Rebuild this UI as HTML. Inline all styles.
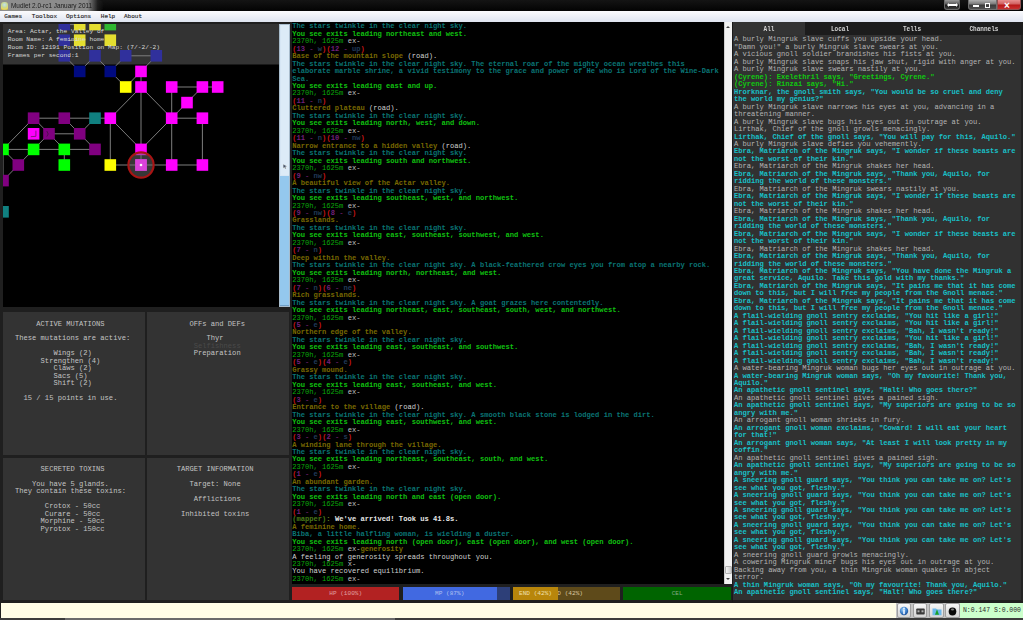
<!DOCTYPE html>
<html><head><meta charset="utf-8"><title>Mudlet</title><style>
*{margin:0;padding:0;box-sizing:border-box}
html,body{width:1023px;height:620px;overflow:hidden;background:#1f1f1f;font-family:"Liberation Mono",monospace}
.abs{position:absolute}
.l{height:7.48px;line-height:7.48px;white-space:pre}
.con{position:absolute;font-size:7.12px;font-weight:bold}
.panel{position:absolute;background:#333;color:#d4d4d4;font-size:7.12px;text-align:center;padding-top:7.16px}
</style></head><body>
<div class="abs" style="left:0;top:0;width:1023px;height:11px;background:linear-gradient(#141414,#030303)"></div>
<div class="abs" style="left:0;top:0;width:104px;height:11px;background:linear-gradient(90deg,#8e8e8e 0,#8a8a8a 84%,rgba(40,40,40,0.6) 94%,rgba(0,0,0,0) 100%);border-radius:0 6px 6px 0;filter:blur(0.6px)"></div>
<div class="abs" style="left:1px;top:1.5px;width:7px;height:8px;background:radial-gradient(circle at 50% 35%,#c0e0f0 0,#c8d890 45%,#e8d860 70%,#b8a040 100%);border-radius:3px 3px 1px 1px"></div>
<div class="abs" style="left:11px;top:0px;height:11px;line-height:11px;font-family:'Liberation Sans',sans-serif;font-size:7.5px;color:#1c1c1c;transform:scaleX(0.855);transform-origin:0 0;white-space:pre">Mudlet 2.0-rc1 January 2011</div>
<div class="abs" style="left:943.5px;top:0;width:16.5px;height:10px;background:linear-gradient(#9a9a9a,#5a5a5a 45%,#1a1a1a 55%,#3a3a3a);border-radius:0 0 3px 3px;border:1px solid #6a6a6a;border-top:none"></div>
<div class="abs" style="left:968px;top:0;width:29px;height:10px;background:linear-gradient(#b0b0b0,#7a7a7a 45%,#3a3a3a 55%,#505050);border-radius:0 0 0 3px;border:1px solid #707070;border-top:none"></div>
<div class="abs" style="left:997px;top:0;width:24px;height:10px;background:linear-gradient(#e89090,#d06060 45%,#b81818 55%,#c83030);border-radius:0 0 3px 0;border:1px solid #905050;border-top:none"></div>
<div class="abs" style="left:947.5px;top:4px;width:9px;height:2px;background:#fff"></div>
<div class="abs" style="left:946.5px;top:3px;width:0;height:0;border-top:2px solid transparent;border-bottom:2px solid transparent;border-right:2px solid #fff"></div>
<div class="abs" style="left:955.5px;top:3px;width:0;height:0;border-top:2px solid transparent;border-bottom:2px solid transparent;border-left:2px solid #fff"></div>
<div class="abs" style="left:973px;top:5px;width:6px;height:2px;background:#fff"></div>
<div class="abs" style="left:985px;top:3px;width:5px;height:5px;border:1.2px solid #fff"></div>
<div class="abs" style="left:1004px;top:-0.5px;color:#fff;font-size:10px;line-height:11px;font-family:'Liberation Sans',sans-serif;font-weight:bold">&#215;</div>
<div class="abs" style="left:0;top:11px;width:1023px;height:11px;background:linear-gradient(#fbfbfd,#dfe4f0)"></div>
<div class="abs" style="left:4.2px;top:10.6px;height:11px;line-height:11px;font-size:6px;color:#1a1a1a;font-weight:normal;-webkit-text-stroke:0.15px #333">Games</div>
<div class="abs" style="left:31.8px;top:10.6px;height:11px;line-height:11px;font-size:6px;color:#1a1a1a;font-weight:normal;-webkit-text-stroke:0.15px #333">Toolbox</div>
<div class="abs" style="left:66px;top:10.6px;height:11px;line-height:11px;font-size:6px;color:#1a1a1a;font-weight:normal;-webkit-text-stroke:0.15px #333">Options</div>
<div class="abs" style="left:100.8px;top:10.6px;height:11px;line-height:11px;font-size:6px;color:#1a1a1a;font-weight:normal;-webkit-text-stroke:0.15px #333">Help</div>
<div class="abs" style="left:124px;top:10.6px;height:11px;line-height:11px;font-size:6px;color:#1a1a1a;font-weight:normal;-webkit-text-stroke:0.15px #333">About</div>
<svg width="277" height="283" viewBox="2.5 24 277 283" style="position:absolute;left:2.5px;top:24px">
<rect x="2.5" y="24" width="277" height="283" fill="#000"/>
<rect x="2.5" y="24" width="277" height="40.5" fill="#333333"/>
<line x1="63.8" y1="55.8" x2="79.2" y2="71.4" stroke="#7e7e7e" stroke-width="1"/>
<line x1="79.2" y1="71.4" x2="94.5" y2="55.8" stroke="#7e7e7e" stroke-width="1"/>
<line x1="94.5" y1="55.8" x2="109.8" y2="71.4" stroke="#7e7e7e" stroke-width="1"/>
<line x1="109.8" y1="71.4" x2="125.2" y2="55.8" stroke="#7e7e7e" stroke-width="1"/>
<line x1="125.2" y1="55.8" x2="155.8" y2="55.8" stroke="#7e7e7e" stroke-width="1"/>
<line x1="155.8" y1="55.8" x2="140.5" y2="71.4" stroke="#7e7e7e" stroke-width="1"/>
<line x1="109.8" y1="71.4" x2="125.2" y2="87.0" stroke="#7e7e7e" stroke-width="1"/>
<line x1="125.2" y1="87.0" x2="140.5" y2="71.4" stroke="#7e7e7e" stroke-width="1"/>
<line x1="140.5" y1="71.4" x2="140.5" y2="87.0" stroke="#7e7e7e" stroke-width="1"/>
<line x1="171.2" y1="87.0" x2="201.9" y2="87.0" stroke="#7e7e7e" stroke-width="1"/>
<line x1="201.9" y1="87.0" x2="217.2" y2="87.0" stroke="#7e7e7e" stroke-width="1"/>
<line x1="140.5" y1="87.0" x2="140.5" y2="149.4" stroke="#7e7e7e" stroke-width="1"/>
<line x1="140.5" y1="87.0" x2="109.8" y2="118.2" stroke="#7e7e7e" stroke-width="1"/>
<line x1="140.5" y1="87.0" x2="171.2" y2="118.2" stroke="#7e7e7e" stroke-width="1"/>
<line x1="109.8" y1="118.2" x2="140.5" y2="149.4" stroke="#7e7e7e" stroke-width="1"/>
<line x1="171.2" y1="118.2" x2="140.5" y2="149.4" stroke="#7e7e7e" stroke-width="1"/>
<line x1="171.2" y1="87.0" x2="171.2" y2="165.0" stroke="#7e7e7e" stroke-width="1"/>
<line x1="171.2" y1="118.2" x2="186.5" y2="102.6" stroke="#7e7e7e" stroke-width="1"/>
<line x1="186.5" y1="102.6" x2="201.9" y2="87.0" stroke="#7e7e7e" stroke-width="1"/>
<line x1="171.2" y1="118.2" x2="201.9" y2="118.2" stroke="#7e7e7e" stroke-width="1"/>
<line x1="201.9" y1="118.2" x2="201.9" y2="165.0" stroke="#7e7e7e" stroke-width="1"/>
<line x1="109.8" y1="118.2" x2="109.8" y2="165.0" stroke="#7e7e7e" stroke-width="1"/>
<line x1="109.8" y1="165.0" x2="201.9" y2="165.0" stroke="#7e7e7e" stroke-width="1"/>
<line x1="140.5" y1="149.4" x2="140.5" y2="165.0" stroke="#7e7e7e" stroke-width="1"/>
<line x1="33.1" y1="118.2" x2="109.8" y2="118.2" stroke="#7e7e7e" stroke-width="1"/>
<line x1="33.1" y1="118.2" x2="2.5" y2="149.4" stroke="#7e7e7e" stroke-width="1"/>
<line x1="33.1" y1="118.2" x2="48.5" y2="133.8" stroke="#7e7e7e" stroke-width="1"/>
<line x1="63.8" y1="118.2" x2="79.2" y2="133.8" stroke="#7e7e7e" stroke-width="1"/>
<line x1="79.2" y1="133.8" x2="94.5" y2="118.2" stroke="#7e7e7e" stroke-width="1"/>
<line x1="48.5" y1="133.8" x2="79.2" y2="133.8" stroke="#7e7e7e" stroke-width="1"/>
<line x1="48.5" y1="133.8" x2="33.1" y2="149.4" stroke="#7e7e7e" stroke-width="1"/>
<line x1="48.5" y1="133.8" x2="63.8" y2="149.4" stroke="#7e7e7e" stroke-width="1"/>
<line x1="79.2" y1="133.8" x2="94.5" y2="149.4" stroke="#7e7e7e" stroke-width="1"/>
<line x1="2.5" y1="149.4" x2="94.5" y2="149.4" stroke="#7e7e7e" stroke-width="1"/>
<line x1="2.5" y1="149.4" x2="17.8" y2="165.0" stroke="#7e7e7e" stroke-width="1"/>
<line x1="33.1" y1="149.4" x2="17.8" y2="165.0" stroke="#7e7e7e" stroke-width="1"/>
<line x1="63.8" y1="149.4" x2="63.8" y2="165.0" stroke="#7e7e7e" stroke-width="1"/>
<line x1="2.5" y1="149.4" x2="2.5" y2="180.6" stroke="#7e7e7e" stroke-width="1"/>
<line x1="17.8" y1="165.0" x2="2.5" y2="180.6" stroke="#7e7e7e" stroke-width="1"/>
<line x1="63.8" y1="24.6" x2="79.2" y2="24.6" stroke="#7e7e7e" stroke-width="1"/>
<line x1="63.8" y1="40.2" x2="79.2" y2="40.2" stroke="#7e7e7e" stroke-width="1"/>
<rect x="58.0" y="18.8" width="11.6" height="11.6" fill="#30309c"/>
<rect x="73.4" y="18.8" width="11.6" height="11.6" fill="#e4de30"/>
<rect x="88.7" y="18.8" width="11.6" height="11.6" fill="#e4de30"/>
<rect x="104.0" y="18.8" width="11.6" height="11.6" fill="#30b830"/>
<rect x="58.0" y="34.4" width="11.6" height="11.6" fill="#30309c"/>
<rect x="73.4" y="34.4" width="11.6" height="11.6" fill="#e4de30"/>
<rect x="104.0" y="34.4" width="11.6" height="11.6" fill="#e4de30"/>
<rect x="58.0" y="50.0" width="11.6" height="11.6" fill="#30309c"/>
<rect x="88.7" y="50.0" width="11.6" height="11.6" fill="#30309c"/>
<rect x="119.4" y="50.0" width="11.6" height="11.6" fill="#30309c"/>
<rect x="150.0" y="50.0" width="11.6" height="11.6" fill="#30309c"/>
<rect x="73.4" y="65.6" width="11.6" height="11.6" fill="#000a80"/>
<rect x="104.0" y="65.6" width="11.6" height="11.6" fill="#000a80"/>
<rect x="134.7" y="65.6" width="11.6" height="11.6" fill="#ff00ff"/>
<rect x="119.4" y="81.2" width="11.6" height="11.6" fill="#ffff00"/>
<rect x="134.7" y="81.2" width="11.6" height="11.6" fill="#ff00ff"/>
<rect x="165.4" y="81.2" width="11.6" height="11.6" fill="#ff00ff"/>
<rect x="196.1" y="81.2" width="11.6" height="11.6" fill="#ff00ff"/>
<rect x="211.4" y="81.2" width="11.6" height="11.6" fill="#ff00ff"/>
<rect x="180.7" y="96.8" width="11.6" height="11.6" fill="#ff00ff"/>
<rect x="27.3" y="112.4" width="11.6" height="11.6" fill="#800080"/>
<rect x="58.0" y="112.4" width="11.6" height="11.6" fill="#800080"/>
<rect x="88.7" y="112.4" width="11.6" height="11.6" fill="#108080"/>
<rect x="104.0" y="112.4" width="11.6" height="11.6" fill="#ff00ff"/>
<rect x="165.4" y="112.4" width="11.6" height="11.6" fill="#ff00ff"/>
<rect x="196.1" y="112.4" width="11.6" height="11.6" fill="#ff00ff"/>
<rect x="27.3" y="128.0" width="11.6" height="11.6" fill="#ff00ff"/>
<rect x="42.7" y="128.0" width="11.6" height="11.6" fill="#800080"/>
<rect x="73.4" y="128.0" width="11.6" height="11.6" fill="#800080"/>
<rect x="-3.3" y="143.6" width="11.6" height="11.6" fill="#00ff00"/>
<rect x="27.3" y="143.6" width="11.6" height="11.6" fill="#00ff00"/>
<rect x="58.0" y="143.6" width="11.6" height="11.6" fill="#00ff00"/>
<rect x="88.7" y="143.6" width="11.6" height="11.6" fill="#800080"/>
<rect x="134.7" y="143.6" width="11.6" height="11.6" fill="#ff00ff"/>
<rect x="12.0" y="159.2" width="11.6" height="11.6" fill="#800080"/>
<rect x="58.0" y="159.2" width="11.6" height="11.6" fill="#00ff00"/>
<rect x="104.0" y="159.2" width="11.6" height="11.6" fill="#ffff00"/>
<rect x="134.7" y="159.2" width="11.6" height="11.6" fill="#e040e0"/>
<rect x="165.4" y="159.2" width="11.6" height="11.6" fill="#ff00ff"/>
<rect x="196.1" y="159.2" width="11.6" height="11.6" fill="#ff00ff"/>
<rect x="-3.3" y="174.8" width="11.6" height="11.6" fill="#800080"/>
<rect x="-3.3" y="206.0" width="11.6" height="11.6" fill="#108080"/>
<path d="M35.4 130.6 V136.3 L30.3 136.7" fill="none" stroke="#602060" stroke-width="0.8"/>
<path d="M46.3 131.0 L47.7 134.0 L46.3 136.6" fill="none" stroke="#401040" stroke-width="0.8"/>
<circle cx="140.5" cy="165.0" r="12.6" fill="rgba(110,110,110,0.5)" stroke="#a81414" stroke-width="2.2"/>
<rect x="134.7" y="159.2" width="11.6" height="11.6" fill="#e040e0" opacity="0.9"/>
<circle cx="140.5" cy="165.0" r="1.3" fill="#fff"/>
</svg>
<div class="abs" style="left:7.8px;top:27.8px;font-size:6.2px;color:#d8d8d8"><div style="height:8px;line-height:8px;white-space:pre">Area: Actar, the Valley of</div><div style="height:8px;line-height:8px;white-space:pre">Room Name: A feminine home</div><div style="height:8px;line-height:8px;white-space:pre">Room ID: 12191 Position on Map: (7/-2/-2)</div><div style="height:8px;line-height:8px;white-space:pre">Frames per second:1</div></div>
<div class="abs" style="left:279px;top:24px;width:11px;height:283px;background:#d6e6f4;border:1px solid #a8bccc"></div>
<div class="abs" style="left:280.5px;top:25px;width:8px;height:150px;background:#dcebf7"></div>
<div class="abs" style="left:280px;top:176px;width:9px;height:130px;background:#94c8ee;border-bottom:1px solid #70a0c8"></div>
<svg class="abs" style="left:283px;top:163.5px" width="4" height="5" viewBox="0 0 6 7"><path d="M0.5 0.5 L5.5 3.2 L3.2 3.8 L4.3 6.3 L3.2 6.7 L2.2 4.4 L0.5 5.8 Z" fill="#3a4a6a" stroke="#c8c0a0" stroke-width="0.4"/></svg>
<div class="abs" style="left:3px;top:312px;width:141.6px;height:142.5px;background:#333"></div>
<div class="con" style="left:15.0px;top:320.56px;color:#c4c4c4;font-weight:normal">
<div class="l">     ACTIVE MUTATIONS</div>
<div class="l">             </div>
<div class="l">These mutations are active:</div>
<div class="l">             </div>
<div class="l">         Wings (2)</div>
<div class="l">      Strengthen (4)</div>
<div class="l">         Claws (2)</div>
<div class="l">         Sacs (5)</div>
<div class="l">         Shift (2)</div>
<div class="l">             </div>
<div class="l">  15 / 15 points in use.</div>
</div>
<div class="abs" style="left:147px;top:312px;width:142px;height:142.5px;background:#333"></div>
<div class="con" style="left:159.6px;top:320.56px;color:#c4c4c4;font-weight:normal">
<div class="l">       OFFs and DEFs</div>
<div class="l">             </div>
<div class="l">           Thyr</div>
<div class="l" style="color:#4a4a4a">        Selfishness</div>
<div class="l">        Preparation</div>
</div>
<div class="abs" style="left:3px;top:457.5px;width:141.6px;height:142.5px;background:#333"></div>
<div class="con" style="left:15.0px;top:466.06px;color:#c4c4c4;font-weight:normal">
<div class="l">      SECRETED TOXINS</div>
<div class="l">             </div>
<div class="l">    You have 5 glands.</div>
<div class="l">They contain these toxins:</div>
<div class="l">             </div>
<div class="l">       Crotox - 50cc</div>
<div class="l">       Curare - 50cc</div>
<div class="l">      Morphine - 50cc</div>
<div class="l">      Pyrotox - 150cc</div>
</div>
<div class="abs" style="left:147px;top:457.5px;width:142px;height:142.5px;background:#333"></div>
<div class="con" style="left:159.6px;top:466.06px;color:#c4c4c4;font-weight:normal">
<div class="l">    TARGET INFORMATION</div>
<div class="l">             </div>
<div class="l">       Target: None</div>
<div class="l">             </div>
<div class="l">        Afflictions</div>
<div class="l">             </div>
<div class="l">     Inhibited toxins</div>
</div>
<div class="abs" style="left:292px;top:22px;width:431.5px;height:562px;background:#000"></div>
<div class="con" style="left:292.2px;top:23.26px"><div class="l"><span style="color:#0a7474">The stars twinkle in the clear night sky.</span></div>
<div class="l"><span style="color:#10c010">You see exits leading northeast and west.</span></div>
<div class="l"><span style="color:#0aa80a;font-weight:normal">2370h, 1625m </span><span style="color:#c0c0c0;font-weight:normal">ex-</span></div>
<div class="l"><span style="color:#c81414">(</span><span style="color:#70207a">13</span><span style="color:#5a1a5a"> - </span><span style="color:#203a58">w</span><span style="color:#c81414">)</span><span style="color:#c81414">(</span><span style="color:#70207a">12</span><span style="color:#5a1a5a"> - </span><span style="color:#203a58">up</span><span style="color:#c81414">)</span></div>
<div class="l"><span style="color:#786800">Base of the mountain slope </span><span style="color:#d0d0d0;font-weight:normal">(road).</span></div>
<div class="l"><span style="color:#0a7474">The stars twinkle in the clear night sky. The eternal roar of the mighty ocean wreathes this</span></div>
<div class="l"><span style="color:#0a7474">elaborate marble shrine, a vivid testimony to the grace and power of He who is Lord of the Wine-Dark</span></div>
<div class="l"><span style="color:#0a7474">Sea.</span></div>
<div class="l"><span style="color:#10c010">You see exits leading east and up.</span></div>
<div class="l"><span style="color:#0aa80a;font-weight:normal">2370h, 1625m </span><span style="color:#c0c0c0;font-weight:normal">ex-</span></div>
<div class="l"><span style="color:#c81414">(</span><span style="color:#70207a">11</span><span style="color:#5a1a5a"> - </span><span style="color:#203a58">n</span><span style="color:#c81414">)</span></div>
<div class="l"><span style="color:#786800">Cluttered plateau </span><span style="color:#d0d0d0;font-weight:normal">(road).</span></div>
<div class="l"><span style="color:#0a7474">The stars twinkle in the clear night sky.</span></div>
<div class="l"><span style="color:#10c010">You see exits leading north, west, and down.</span></div>
<div class="l"><span style="color:#0aa80a;font-weight:normal">2370h, 1625m </span><span style="color:#c0c0c0;font-weight:normal">ex-</span></div>
<div class="l"><span style="color:#c81414">(</span><span style="color:#70207a">11</span><span style="color:#5a1a5a"> - </span><span style="color:#203a58">n</span><span style="color:#c81414">)</span><span style="color:#c81414">(</span><span style="color:#70207a">10</span><span style="color:#5a1a5a"> - </span><span style="color:#203a58">nw</span><span style="color:#c81414">)</span></div>
<div class="l"><span style="color:#786800">Narrow entrance to a hidden valley </span><span style="color:#d0d0d0;font-weight:normal">(road).</span></div>
<div class="l"><span style="color:#0a7474">The stars twinkle in the clear night sky.</span></div>
<div class="l"><span style="color:#10c010">You see exits leading south and northwest.</span></div>
<div class="l"><span style="color:#0aa80a;font-weight:normal">2370h, 1625m </span><span style="color:#c0c0c0;font-weight:normal">ex-</span></div>
<div class="l"><span style="color:#c81414">(</span><span style="color:#70207a">9</span><span style="color:#5a1a5a"> - </span><span style="color:#203a58">nw</span><span style="color:#c81414">)</span></div>
<div class="l"><span style="color:#786800">A beautiful view of the Actar valley.</span></div>
<div class="l"><span style="color:#0a7474">The stars twinkle in the clear night sky.</span></div>
<div class="l"><span style="color:#10c010">You see exits leading southeast, west, and northwest.</span></div>
<div class="l"><span style="color:#0aa80a;font-weight:normal">2370h, 1625m </span><span style="color:#c0c0c0;font-weight:normal">ex-</span></div>
<div class="l"><span style="color:#c81414">(</span><span style="color:#70207a">9</span><span style="color:#5a1a5a"> - </span><span style="color:#203a58">nw</span><span style="color:#c81414">)</span><span style="color:#c81414">(</span><span style="color:#70207a">8</span><span style="color:#5a1a5a"> - </span><span style="color:#203a58">e</span><span style="color:#c81414">)</span></div>
<div class="l"><span style="color:#786800">Grasslands.</span></div>
<div class="l"><span style="color:#0a7474">The stars twinkle in the clear night sky.</span></div>
<div class="l"><span style="color:#10c010">You see exits leading east, southeast, southwest, and west.</span></div>
<div class="l"><span style="color:#0aa80a;font-weight:normal">2370h, 1625m </span><span style="color:#c0c0c0;font-weight:normal">ex-</span></div>
<div class="l"><span style="color:#c81414">(</span><span style="color:#70207a">7</span><span style="color:#5a1a5a"> - </span><span style="color:#203a58">n</span><span style="color:#c81414">)</span></div>
<div class="l"><span style="color:#786800">Deep within the valley.</span></div>
<div class="l"><span style="color:#0a7474">The stars twinkle in the clear night sky. A black-feathered crow eyes you from atop a nearby rock.</span></div>
<div class="l"><span style="color:#10c010">You see exits leading north, northeast, and west.</span></div>
<div class="l"><span style="color:#0aa80a;font-weight:normal">2370h, 1625m </span><span style="color:#c0c0c0;font-weight:normal">ex-</span></div>
<div class="l"><span style="color:#c81414">(</span><span style="color:#70207a">7</span><span style="color:#5a1a5a"> - </span><span style="color:#203a58">n</span><span style="color:#c81414">)</span><span style="color:#c81414">(</span><span style="color:#70207a">6</span><span style="color:#5a1a5a"> - </span><span style="color:#203a58">ne</span><span style="color:#c81414">)</span></div>
<div class="l"><span style="color:#786800">Rich grasslands.</span></div>
<div class="l"><span style="color:#0a7474">The stars twinkle in the clear night sky. A goat grazes here contentedly.</span></div>
<div class="l"><span style="color:#10c010">You see exits leading northeast, east, southeast, south, west, and northwest.</span></div>
<div class="l"><span style="color:#0aa80a;font-weight:normal">2370h, 1625m </span><span style="color:#c0c0c0;font-weight:normal">ex-</span></div>
<div class="l"><span style="color:#c81414">(</span><span style="color:#70207a">5</span><span style="color:#5a1a5a"> - </span><span style="color:#203a58">e</span><span style="color:#c81414">)</span></div>
<div class="l"><span style="color:#786800">Northern edge of the valley.</span></div>
<div class="l"><span style="color:#0a7474">The stars twinkle in the clear night sky.</span></div>
<div class="l"><span style="color:#10c010">You see exits leading east, southeast, and southwest.</span></div>
<div class="l"><span style="color:#0aa80a;font-weight:normal">2370h, 1625m </span><span style="color:#c0c0c0;font-weight:normal">ex-</span></div>
<div class="l"><span style="color:#c81414">(</span><span style="color:#70207a">5</span><span style="color:#5a1a5a"> - </span><span style="color:#203a58">e</span><span style="color:#c81414">)</span><span style="color:#c81414">(</span><span style="color:#70207a">4</span><span style="color:#5a1a5a"> - </span><span style="color:#203a58">e</span><span style="color:#c81414">)</span></div>
<div class="l"><span style="color:#786800">Grassy mound.</span></div>
<div class="l"><span style="color:#0a7474">The stars twinkle in the clear night sky.</span></div>
<div class="l"><span style="color:#10c010">You see exits leading east, southeast, and west.</span></div>
<div class="l"><span style="color:#0aa80a;font-weight:normal">2370h, 1625m </span><span style="color:#c0c0c0;font-weight:normal">ex-</span></div>
<div class="l"><span style="color:#c81414">(</span><span style="color:#70207a">3</span><span style="color:#5a1a5a"> - </span><span style="color:#203a58">e</span><span style="color:#c81414">)</span></div>
<div class="l"><span style="color:#786800">Entrance to the village </span><span style="color:#d0d0d0;font-weight:normal">(road).</span></div>
<div class="l"><span style="color:#0a7474">The stars twinkle in the clear night sky. A smooth black stone is lodged in the dirt.</span></div>
<div class="l"><span style="color:#10c010">You see exits leading east, southwest, and west.</span></div>
<div class="l"><span style="color:#0aa80a;font-weight:normal">2370h, 1625m </span><span style="color:#c0c0c0;font-weight:normal">ex-</span></div>
<div class="l"><span style="color:#c81414">(</span><span style="color:#70207a">3</span><span style="color:#5a1a5a"> - </span><span style="color:#203a58">e</span><span style="color:#c81414">)</span><span style="color:#c81414">(</span><span style="color:#70207a">2</span><span style="color:#5a1a5a"> - </span><span style="color:#203a58">s</span><span style="color:#c81414">)</span></div>
<div class="l"><span style="color:#786800">A winding lane through the village.</span></div>
<div class="l"><span style="color:#0a7474">The stars twinkle in the clear night sky.</span></div>
<div class="l"><span style="color:#10c010">You see exits leading northeast, southeast, south, and west.</span></div>
<div class="l"><span style="color:#0aa80a;font-weight:normal">2370h, 1625m </span><span style="color:#c0c0c0;font-weight:normal">ex-</span></div>
<div class="l"><span style="color:#c81414">(</span><span style="color:#70207a">1</span><span style="color:#5a1a5a"> - </span><span style="color:#203a58">e</span><span style="color:#c81414">)</span></div>
<div class="l"><span style="color:#786800">An abundant garden.</span></div>
<div class="l"><span style="color:#0a7474">The stars twinkle in the clear night sky.</span></div>
<div class="l"><span style="color:#10c010">You see exits leading north and east (open door).</span></div>
<div class="l"><span style="color:#0aa80a;font-weight:normal">2370h, 1625m </span><span style="color:#c0c0c0;font-weight:normal">ex-</span></div>
<div class="l"><span style="color:#c81414">(</span><span style="color:#70207a">1</span><span style="color:#5a1a5a"> - </span><span style="color:#203a58">e</span><span style="color:#c81414">)</span></div>
<div class="l"><span style="color:#4a7a18">(mapper)</span><span style="color:#6a8a20">: </span><span style="color:#e8e8e8">We&#x27;ve arrived! Took us 41.8s.</span></div>
<div class="l"><span style="color:#786800">A feminine home.</span></div>
<div class="l"><span style="color:#0a7474">Biba, a little halfling woman, is wielding a duster.</span></div>
<div class="l"><span style="color:#10c010">You see exits leading north (open door), east (open door), and west (open door).</span></div>
<div class="l"><span style="color:#0aa80a;font-weight:normal">2370h, 1625m </span><span style="color:#c0c0c0;font-weight:normal">ex-</span><span style="color:#786800">generosity</span></div>
<div class="l"><span style="color:#d0d0d0;font-weight:normal">A feeling of generosity spreads throughout you.</span></div>
<div class="l"><span style="color:#0aa80a;font-weight:normal">2370h, 1625m </span><span style="color:#c0c0c0;font-weight:normal">x-</span></div>
<div class="l"><span style="color:#d0d0d0;font-weight:normal">You have recovered equilibrium.</span></div>
<div class="l"><span style="color:#0aa80a;font-weight:normal">2370h, 1625m </span><span style="color:#c0c0c0;font-weight:normal">ex-</span></div></div>
<div class="abs" style="left:723.5px;top:22px;width:8.4px;height:562px;background:#f2f2f2;border-left:1px solid #d0d0d0"></div>
<div class="abs" style="left:724.5px;top:566px;width:7px;height:8px;background:linear-gradient(90deg,#f4f4f4,#c8c8c8);border:1px solid #b0b0b0;border-radius:1px"></div>
<div class="abs" style="left:726px;top:25.5px;width:0;height:0;border-left:2.5px solid transparent;border-right:2.5px solid transparent;border-bottom:2.5px solid #404040"></div>
<div class="abs" style="left:726px;top:578px;width:0;height:0;border-left:2.5px solid transparent;border-right:2.5px solid transparent;border-top:2.5px solid #404040"></div>
<div class="abs" style="left:731.9px;top:22px;width:1.2px;height:580px;background:#1a1a1a"></div>
<div class="abs" style="left:292px;top:586.7px;width:107.4px;height:13.1px;background:#b22222;overflow:hidden"><div class="abs" style="left:0;top:0;width:107.4px;height:13.1px;line-height:13.7px;text-align:center;font-size:6.1px;color:#e0a0a0;white-space:pre">HP (100%)</div><div class="abs" style="left:0;top:0;width:107.4px;height:13.1px;background:#b22222;overflow:hidden"><div class="abs" style="left:0;top:0;width:107.4px;height:13.1px;line-height:13.7px;text-align:center;font-size:6.1px;color:#e0a0a0;white-space:pre">HP (100%)</div></div></div>
<div class="abs" style="left:402.7px;top:586.7px;width:107.3px;height:13.1px;background:#2d3f78;overflow:hidden"><div class="abs" style="left:0;top:0;width:107.3px;height:13.1px;line-height:13.7px;text-align:center;font-size:6.1px;color:#b0c0f0;white-space:pre">MP (87%)</div><div class="abs" style="left:0;top:0;width:94px;height:13.1px;background:#4169e1;overflow:hidden"><div class="abs" style="left:0;top:0;width:94px;height:13.1px;line-height:13.7px;text-align:center;font-size:6.1px;color:#b0c0f0;white-space:pre">MP (87%)</div></div></div>
<div class="abs" style="left:513px;top:586.7px;width:107px;height:13.1px;background:#5e4a1a;overflow:hidden"><div class="abs" style="left:0;top:0;width:107px;height:13.1px;line-height:13.7px;text-align:center;font-size:6.1px;color:#d8c8a0;white-space:pre">END (42%)</div><div class="abs" style="left:0;top:0;width:45px;height:13.1px;background:#b8860b;overflow:hidden"><div class="abs" style="left:0;top:0;width:45px;height:13.1px;line-height:13.7px;text-align:center;font-size:6.1px;color:#f0e0b0;white-space:pre">END (42%)</div></div></div>
<div class="abs" style="left:623.4px;top:586.7px;width:107.6px;height:13.1px;background:#006400;overflow:hidden"><div class="abs" style="left:0;top:0;width:107.6px;height:13.1px;line-height:13.7px;text-align:center;font-size:6.1px;color:#80a880;white-space:pre">CEL</div><div class="abs" style="left:0;top:0;width:107.6px;height:13.1px;background:#006400;overflow:hidden"><div class="abs" style="left:0;top:0;width:107.6px;height:13.1px;line-height:13.7px;text-align:center;font-size:6.1px;color:#80a880;white-space:pre">CEL</div></div></div>
<div class="abs" style="left:732.5px;top:22px;width:290.5px;height:578px;background:#313131"></div>
<div class="abs" style="left:1021px;top:33.5px;width:2px;height:567px;background:#242424"></div>
<div class="abs" style="left:732.5px;top:22px;width:290.5px;height:12.6px;background:#1c1c1c"></div>
<div class="abs" style="left:733px;top:22px;width:72px;height:12.6px;background:#333"></div>
<div class="abs" style="left:729.1px;top:23.6px;width:80px;height:11px;line-height:11px;text-align:center;font-size:7.2px;color:#d4d4d4;font-weight:bold;transform:scaleX(0.84)">All</div>
<div class="abs" style="left:800.3px;top:23.6px;width:80px;height:11px;line-height:11px;text-align:center;font-size:7.2px;color:#d4d4d4;font-weight:bold;transform:scaleX(0.84)">Local</div>
<div class="abs" style="left:872.1px;top:23.6px;width:80px;height:11px;line-height:11px;text-align:center;font-size:7.2px;color:#d4d4d4;font-weight:bold;transform:scaleX(0.84)">Tells</div>
<div class="abs" style="left:943.9px;top:23.6px;width:80px;height:11px;line-height:11px;text-align:center;font-size:7.2px;color:#d4d4d4;font-weight:bold;transform:scaleX(0.84)">Channels</div>
<div class="con" style="left:734px;top:36.46px"><div class="l"><span style="color:#b4b4b4;font-weight:normal">A burly Mingruk slave cuffs you upside your head.</span></div>
<div class="l"><span style="color:#b4b4b4;font-weight:normal">&quot;Damn you!&quot; a burly Mingruk slave swears at you.</span></div>
<div class="l"><span style="color:#b4b4b4;font-weight:normal">A vicious gnoll soldier brandishes his fists at you.</span></div>
<div class="l"><span style="color:#b4b4b4;font-weight:normal">A burly Mingruk slave snaps his jaw shut, rigid with anger at you.</span></div>
<div class="l"><span style="color:#b4b4b4;font-weight:normal">A burly Mingruk slave swears nastily at you.</span></div>
<div class="l"><span style="color:#10c810">(Cyrene): Exelethril says, &quot;Greetings, Cyrene.&quot;</span></div>
<div class="l"><span style="color:#10c810">(Cyrene): Rinzai says, &quot;Hi.&quot;</span></div>
<div class="l"><span style="color:#18c0c8">Hrorknar, the gnoll smith says, &quot;You would be so cruel and deny</span></div>
<div class="l"><span style="color:#18c0c8">the world my genius?&quot;</span></div>
<div class="l"><span style="color:#b4b4b4;font-weight:normal">A burly Mingruk slave narrows his eyes at you, advancing in a</span></div>
<div class="l"><span style="color:#b4b4b4;font-weight:normal">threatening manner.</span></div>
<div class="l"><span style="color:#b4b4b4;font-weight:normal">A burly Mingruk slave bugs his eyes out in outrage at you.</span></div>
<div class="l"><span style="color:#b4b4b4;font-weight:normal">Lirthak, Chief of the gnoll growls menacingly.</span></div>
<div class="l"><span style="color:#18c0c8">Lirthak, Chief of the gnoll says, &quot;You will pay for this, Aquilo.&quot;</span></div>
<div class="l"><span style="color:#b4b4b4;font-weight:normal">A burly Mingruk slave defies you vehemently.</span></div>
<div class="l"><span style="color:#18c0c8">Ebra, Matriarch of the Mingruk says, &quot;I wonder if these beasts are</span></div>
<div class="l"><span style="color:#18c0c8">not the worst of their kin.&quot;</span></div>
<div class="l"><span style="color:#b4b4b4;font-weight:normal">Ebra, Matriarch of the Mingruk shakes her head.</span></div>
<div class="l"><span style="color:#18c0c8">Ebra, Matriarch of the Mingruk says, &quot;Thank you, Aquilo, for</span></div>
<div class="l"><span style="color:#18c0c8">ridding the world of these monsters.&quot;</span></div>
<div class="l"><span style="color:#b4b4b4;font-weight:normal">Ebra, Matriarch of the Mingruk swears nastily at you.</span></div>
<div class="l"><span style="color:#18c0c8">Ebra, Matriarch of the Mingruk says, &quot;I wonder if these beasts are</span></div>
<div class="l"><span style="color:#18c0c8">not the worst of their kin.&quot;</span></div>
<div class="l"><span style="color:#b4b4b4;font-weight:normal">Ebra, Matriarch of the Mingruk shakes her head.</span></div>
<div class="l"><span style="color:#18c0c8">Ebra, Matriarch of the Mingruk says, &quot;Thank you, Aquilo, for</span></div>
<div class="l"><span style="color:#18c0c8">ridding the world of these monsters.&quot;</span></div>
<div class="l"><span style="color:#18c0c8">Ebra, Matriarch of the Mingruk says, &quot;I wonder if these beasts are</span></div>
<div class="l"><span style="color:#18c0c8">not the worst of their kin.&quot;</span></div>
<div class="l"><span style="color:#b4b4b4;font-weight:normal">Ebra, Matriarch of the Mingruk shakes her head.</span></div>
<div class="l"><span style="color:#18c0c8">Ebra, Matriarch of the Mingruk says, &quot;Thank you, Aquilo, for</span></div>
<div class="l"><span style="color:#18c0c8">ridding the world of these monsters.&quot;</span></div>
<div class="l"><span style="color:#18c0c8">Ebra, Matriarch of the Mingruk says, &quot;You have done the Mingruk a</span></div>
<div class="l"><span style="color:#18c0c8">great service, Aquilo. Take this gold with my thanks.&quot;</span></div>
<div class="l"><span style="color:#18c0c8">Ebra, Matriarch of the Mingruk says, &quot;It pains me that it has come</span></div>
<div class="l"><span style="color:#18c0c8">down to this, but I will free my people from the Gnoll menace.&quot;</span></div>
<div class="l"><span style="color:#18c0c8">Ebra, Matriarch of the Mingruk says, &quot;It pains me that it has come</span></div>
<div class="l"><span style="color:#18c0c8">down to this, but I will free my people from the Gnoll menace.&quot;</span></div>
<div class="l"><span style="color:#18c0c8">A flail-wielding gnoll sentry exclaims, &quot;You hit like a girl!&quot;</span></div>
<div class="l"><span style="color:#18c0c8">A flail-wielding gnoll sentry exclaims, &quot;You hit like a girl!&quot;</span></div>
<div class="l"><span style="color:#18c0c8">A flail-wielding gnoll sentry exclaims, &quot;Bah, I wasn&#x27;t ready!&quot;</span></div>
<div class="l"><span style="color:#18c0c8">A flail-wielding gnoll sentry exclaims, &quot;You hit like a girl!&quot;</span></div>
<div class="l"><span style="color:#18c0c8">A flail-wielding gnoll sentry exclaims, &quot;Bah, I wasn&#x27;t ready!&quot;</span></div>
<div class="l"><span style="color:#18c0c8">A flail-wielding gnoll sentry exclaims, &quot;Bah, I wasn&#x27;t ready!&quot;</span></div>
<div class="l"><span style="color:#18c0c8">A flail-wielding gnoll sentry exclaims, &quot;Bah, I wasn&#x27;t ready!&quot;</span></div>
<div class="l"><span style="color:#b4b4b4;font-weight:normal">A water-bearing Mingruk woman bugs her eyes out in outrage at you.</span></div>
<div class="l"><span style="color:#18c0c8">A water-bearing Mingruk woman says, &quot;Oh my favourite! Thank you,</span></div>
<div class="l"><span style="color:#18c0c8">Aquilo.&quot;</span></div>
<div class="l"><span style="color:#18c0c8">An apathetic gnoll sentinel says, &quot;Halt! Who goes there?&quot;</span></div>
<div class="l"><span style="color:#b4b4b4;font-weight:normal">An apathetic gnoll sentinel gives a pained sigh.</span></div>
<div class="l"><span style="color:#18c0c8">An apathetic gnoll sentinel says, &quot;My superiors are going to be so</span></div>
<div class="l"><span style="color:#18c0c8">angry with me.&quot;</span></div>
<div class="l"><span style="color:#b4b4b4;font-weight:normal">An arrogant gnoll woman shrieks in fury.</span></div>
<div class="l"><span style="color:#18c0c8">An arrogant gnoll woman exclaims, &quot;Coward! I will eat your heart</span></div>
<div class="l"><span style="color:#18c0c8">for that!&quot;</span></div>
<div class="l"><span style="color:#18c0c8">An arrogant gnoll woman says, &quot;At least I will look pretty in my</span></div>
<div class="l"><span style="color:#18c0c8">coffin.&quot;</span></div>
<div class="l"><span style="color:#b4b4b4;font-weight:normal">An apathetic gnoll sentinel gives a pained sigh.</span></div>
<div class="l"><span style="color:#18c0c8">An apathetic gnoll sentinel says, &quot;My superiors are going to be so</span></div>
<div class="l"><span style="color:#18c0c8">angry with me.&quot;</span></div>
<div class="l"><span style="color:#18c0c8">A sneering gnoll guard says, &quot;You think you can take me on? Let&#x27;s</span></div>
<div class="l"><span style="color:#18c0c8">see what you got, fleshy.&quot;</span></div>
<div class="l"><span style="color:#18c0c8">A sneering gnoll guard says, &quot;You think you can take me on? Let&#x27;s</span></div>
<div class="l"><span style="color:#18c0c8">see what you got, fleshy.&quot;</span></div>
<div class="l"><span style="color:#18c0c8">A sneering gnoll guard says, &quot;You think you can take me on? Let&#x27;s</span></div>
<div class="l"><span style="color:#18c0c8">see what you got, fleshy.&quot;</span></div>
<div class="l"><span style="color:#18c0c8">A sneering gnoll guard says, &quot;You think you can take me on? Let&#x27;s</span></div>
<div class="l"><span style="color:#18c0c8">see what you got, fleshy.&quot;</span></div>
<div class="l"><span style="color:#18c0c8">A sneering gnoll guard says, &quot;You think you can take me on? Let&#x27;s</span></div>
<div class="l"><span style="color:#18c0c8">see what you got, fleshy.&quot;</span></div>
<div class="l"><span style="color:#b4b4b4;font-weight:normal">A sneering gnoll guard growls menacingly.</span></div>
<div class="l"><span style="color:#b4b4b4;font-weight:normal">A cowering Mingruk miner bugs his eyes out in outrage at you.</span></div>
<div class="l"><span style="color:#b4b4b4;font-weight:normal">Backing away from you, a thin Mingruk woman quakes in abject</span></div>
<div class="l"><span style="color:#b4b4b4;font-weight:normal">terror.</span></div>
<div class="l"><span style="color:#18c0c8">A thin Mingruk woman says, &quot;Oh my favourite! Thank you, Aquilo.&quot;</span></div>
<div class="l"><span style="color:#18c0c8">An apathetic gnoll sentinel says, &quot;Halt! Who goes there?&quot;</span></div></div>
<div class="abs" style="left:0;top:602px;width:1023px;height:18px;background:#1f1f1f"></div>
<div class="abs" style="left:1px;top:602.5px;width:895px;height:16px;background:#fffde6"></div>
<div class="abs" style="left:896px;top:603px;width:64px;height:15.6px;background:#c4c4c4"></div>
<div class="abs" style="left:896.6px;top:603.3px;width:14.6px;height:14.8px;background:linear-gradient(#f8f8f8,#e6e6e6 50%,#d6d6d6);border:1px solid #a0a0a0;border-radius:2px"></div>
<div class="abs" style="left:912.7px;top:603.3px;width:14.6px;height:14.8px;background:linear-gradient(#f8f8f8,#e6e6e6 50%,#d6d6d6);border:1px solid #a0a0a0;border-radius:2px"></div>
<div class="abs" style="left:929px;top:603.3px;width:14.6px;height:14.8px;background:linear-gradient(#f8f8f8,#e6e6e6 50%,#d6d6d6);border:1px solid #a0a0a0;border-radius:2px"></div>
<div class="abs" style="left:945px;top:603.3px;width:14.6px;height:14.8px;background:linear-gradient(#f8f8f8,#e6e6e6 50%,#d6d6d6);border:1px solid #a0a0a0;border-radius:2px"></div>
<svg class="abs" style="left:899px;top:606px" width="10" height="10" viewBox="0 0 10 10"><defs><radialGradient id="gi" cx="0.4" cy="0.35" r="0.7"><stop offset="0" stop-color="#9cd0f4"/><stop offset="0.6" stop-color="#3a7cc8"/><stop offset="1" stop-color="#1a4a90"/></radialGradient></defs><circle cx="5" cy="5" r="4.2" fill="url(#gi)"/><rect x="4.2" y="3.6" width="1.6" height="4.6" fill="#f0f6ff"/><circle cx="5" cy="2.4" r="0.9" fill="#f0f6ff"/></svg>
<svg class="abs" style="left:915.5px;top:607.5px" width="9" height="7" viewBox="0 0 9 7"><rect x="0.3" y="0.5" width="8.4" height="6" rx="0.8" fill="#3a3a3a"/><rect x="1.5" y="2.3" width="2" height="2" fill="#b0b0b0"/><rect x="5.5" y="2.3" width="2" height="2" fill="#b0b0b0"/></svg>
<svg class="abs" style="left:931.5px;top:606.5px" width="10" height="9" viewBox="0 0 10 9"><path d="M0.5 1.5 H4 L5 2.5 H9.5 V8.3 H0.5 Z" fill="#6cb8ec"/><path d="M5 2.2 L7 7.8 H3 Z" fill="#18a028"/></svg>
<svg class="abs" style="left:947.5px;top:606.5px" width="9" height="9" viewBox="0 0 9 9"><ellipse cx="4.5" cy="4.6" rx="3.8" ry="4" fill="#0a0a0a"/><ellipse cx="4.5" cy="2.5" rx="1.6" ry="1" fill="#808080"/></svg>
<div class="abs" style="left:960px;top:603.2px;width:63px;height:15.4px;background:#ccffcc"></div>
<div class="abs" style="left:963px;top:603.2px;height:15.4px;line-height:15.4px;font-size:6.45px;color:#282828;white-space:pre">N:0.147 S:0.000</div>
<div class="abs" style="left:0;top:618px;width:1023px;height:2px;background:#3c3c3c"></div>
<div class="abs" style="left:65px;top:618px;width:330px;height:2px;background:#6a6a6a"></div>
</body></html>
